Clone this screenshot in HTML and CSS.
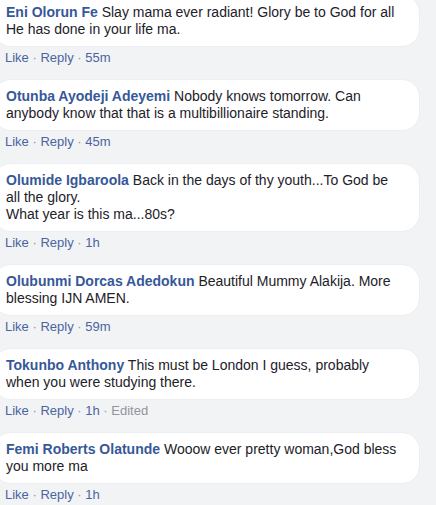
FILE: index.html
```html
<!DOCTYPE html>
<html lang='en'>
<head>
    <meta charset='UTF-8'>
    <meta name='viewport' content='width=device-width, initial-scale=1.0'>
    <title>Comments</title>
    <link rel="stylesheet" href="styles.css">
</head>

<body>
    <div class='comment-list'>
        <div class='comment'>
            <div class='bubble'>
                <a class='author'>Eni Olorun Fe</a> Slay mama ever radiant! Glory be to God for all He has done in your life ma.
            </div>
            <div class='actions'>
                <a class='link'>Like</a><span class='dot'> · </span><a class='link'>Reply</a><span class='dot'> · </span><a class='link'>55m</a>
            </div>
        </div>
        <div class='comment'>
            <div class='bubble'>
                <a class='author'>Otunba Ayodeji Adeyemi</a> Nobody knows tomorrow. Can anybody know that that is a multibillionaire standing.
            </div>
            <div class='actions'>
                <a class='link'>Like</a><span class='dot'> · </span><a class='link'>Reply</a><span class='dot'> · </span><a class='link'>45m</a>
            </div>
        </div>
        <div class='comment'>
            <div class='bubble'>
                <a class='author'>Olumide Igbaroola</a> Back in the days of thy youth...To God be all the glory.<br>What year is this ma...80s?
            </div>
            <div class='actions'>
                <a class='link'>Like</a><span class='dot'> · </span><a class='link'>Reply</a><span class='dot'> · </span><a class='link'>1h</a>
            </div>
        </div>
        <div class='comment'>
            <div class='bubble'>
                <a class='author'>Olubunmi Dorcas Adedokun</a> Beautiful Mummy Alakija. More blessing IJN AMEN.
            </div>
            <div class='actions'>
                <a class='link'>Like</a><span class='dot'> · </span><a class='link'>Reply</a><span class='dot'> · </span><a class='link'>59m</a>
            </div>
        </div>
        <div class='comment'>
            <div class='bubble'>
                <a class='author'>Tokunbo Anthony</a> This must be London I guess, probably when you were studying there.
            </div>
            <div class='actions'>
                <a class='link'>Like</a><span class='dot'> · </span><a class='link'>Reply</a><span class='dot'> · </span><a class='link'>1h</a><span class='dot'> · </span><span class='edited'>Edited</span>
            </div>
        </div>
        <div class='comment'>
            <div class='bubble'>
                <a class='author'>Femi Roberts Olatunde</a> Wooow ever pretty woman,God bless you more ma
            </div>
            <div class='actions'>
                <a class='link'>Like</a><span class='dot'> · </span><a class='link'>Reply</a><span class='dot'> · </span><a class='link'>1h</a>
            </div>
        </div>
    </div>
</body>

</html>
```

FILE: styles.css
```css
* {
    margin: 0px;
    padding: 0px;
    box-sizing: border-box;
}

html {
    overflow: hidden;
}

body {
    background-color: #f2f3f5;
    font-family: 'Liberation Sans', Arial, sans-serif;
    color: #1d2129;
    width: 436px;
    height: 505px;
    overflow: hidden;
}

.comment-list {
    margin-top: -5px;
    display: flex;
    flex-direction: column;
    gap: 13px;
}

/* Comment bubble */
.bubble {
    width: 427px;
    margin-left: -7px;
    padding: 8px 16px 8px 12px;
    background-color: #fff;
    border: 1px solid #eceef1;
    border-radius: 18px;
    font-size: 14px;
    line-height: 17px;
}

.author {
    color: #365899;
    font-weight: bold;
}

/* Like / Reply row */
.actions {
    margin-top: 3px;
    padding-left: 5px;
    font-size: 13px;
    line-height: 16px;
}

.link {
    color: #4b64a0;
}

.dot,
.edited {
    color: #90949c;
}
```
